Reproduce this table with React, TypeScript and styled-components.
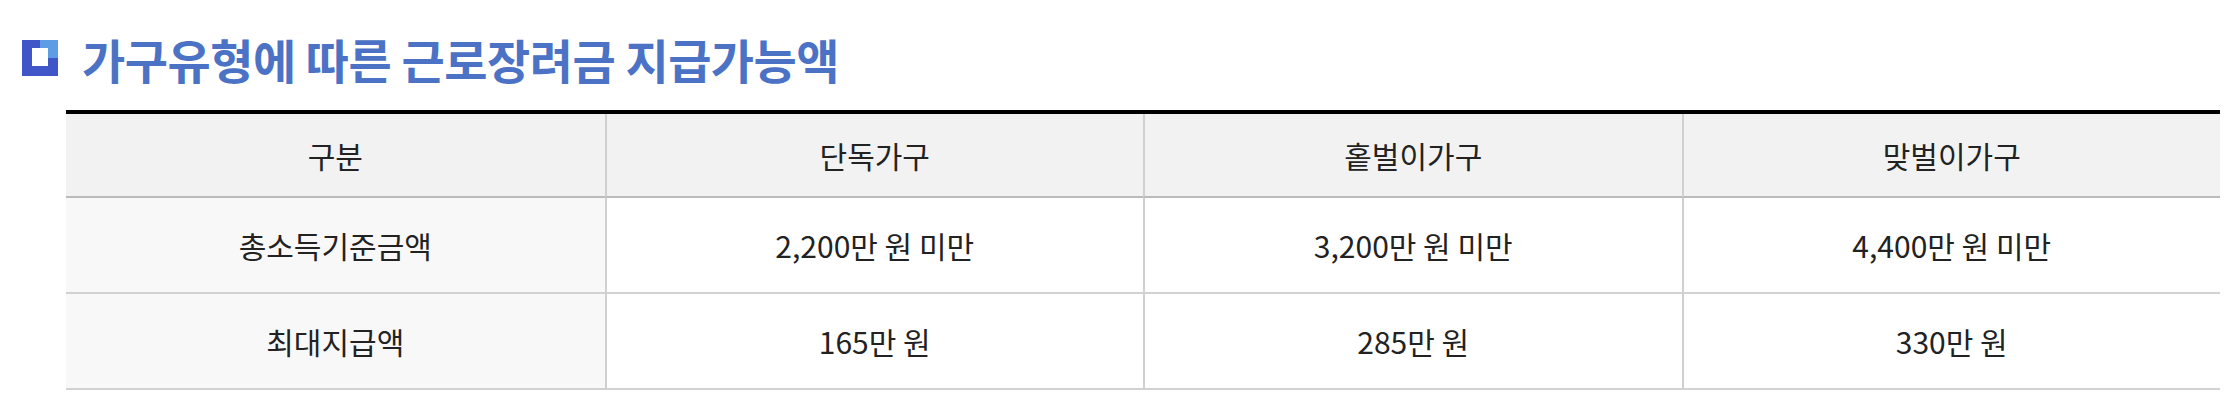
import React from 'react';
import styled, { createGlobalStyle } from 'styled-components';

const GlobalStyle = createGlobalStyle`
  html, body {
    margin: 0;
    padding: 0;
    background: #fff;
  }
  body {
    font-family: "Noto Sans CJK KR", "Noto Sans", sans-serif;
  }
`;

const Page = styled.div`
  width: 2235px;
  height: 400px;
  box-sizing: border-box;
  padding: 34px 0 0 22px;
`;

const TitleRow = styled.h2`
  display: flex;
  align-items: center;
  gap: 24px;
  margin: 0;
  height: 48px;
  font-size: 47px;
  font-weight: 700;
  color: #4b72c5;
  letter-spacing: -0.5px;
  line-height: 1;
`;

const Table = styled.table`
  margin: 28px 0 0 44px;
  width: 2154px;
  table-layout: fixed;
  border-spacing: 0;
  border-top: 4px solid #000;
  font-size: 30px;
  color: #222;
`;

const HeadCell = styled.th`
  height: 82px;
  padding: 0;
  font-weight: 400;
  background: #f2f2f2;
  border-bottom: 2px solid #bbbbbb;
  border-left: 2px solid #d0d0d0;
  &:first-child {
    border-left: none;
  }
`;

const Cell = styled.td<{ $label?: boolean }>`
  height: 94px;
  padding: 0;
  text-align: center;
  background: ${(p) => (p.$label ? '#f8f8f8' : '#fff')};
  border-bottom: 2px solid #d2d2d2;
  border-left: ${(p) => (p.$label ? 'none' : '2px solid #d0d0d0')};
`;

const Icon = () => (
  <svg width="36" height="36" viewBox="0 0 36 36">
    <rect width="36" height="36" fill="#3f55c8" />
    <rect x="18" y="0" width="18" height="18" fill="#5e9de6" />
    <rect x="10" y="8" width="16" height="18" fill="#fff" />
  </svg>
);

const columns = ['구분', '단독가구', '홑벌이가구', '맞벌이가구'];

const rows = [
  ['총소득기준금액', '2,200만 원 미만', '3,200만 원 미만', '4,400만 원 미만'],
  ['최대지급액', '165만 원', '285만 원', '330만 원'],
];

export default function App() {
  return (
    <Page>
      <GlobalStyle />
      <TitleRow>
        <Icon />
        가구유형에 따른 근로장려금 지급가능액
      </TitleRow>
      <Table>
        <thead>
          <tr>
            {columns.map((c) => (
              <HeadCell key={c}>{c}</HeadCell>
            ))}
          </tr>
        </thead>
        <tbody>
          {rows.map((r) => (
            <tr key={r[0]}>
              {r.map((v, i) => (
                <Cell key={i} $label={i === 0}>
                  {v}
                </Cell>
              ))}
            </tr>
          ))}
        </tbody>
      </Table>
    </Page>
  );
}
